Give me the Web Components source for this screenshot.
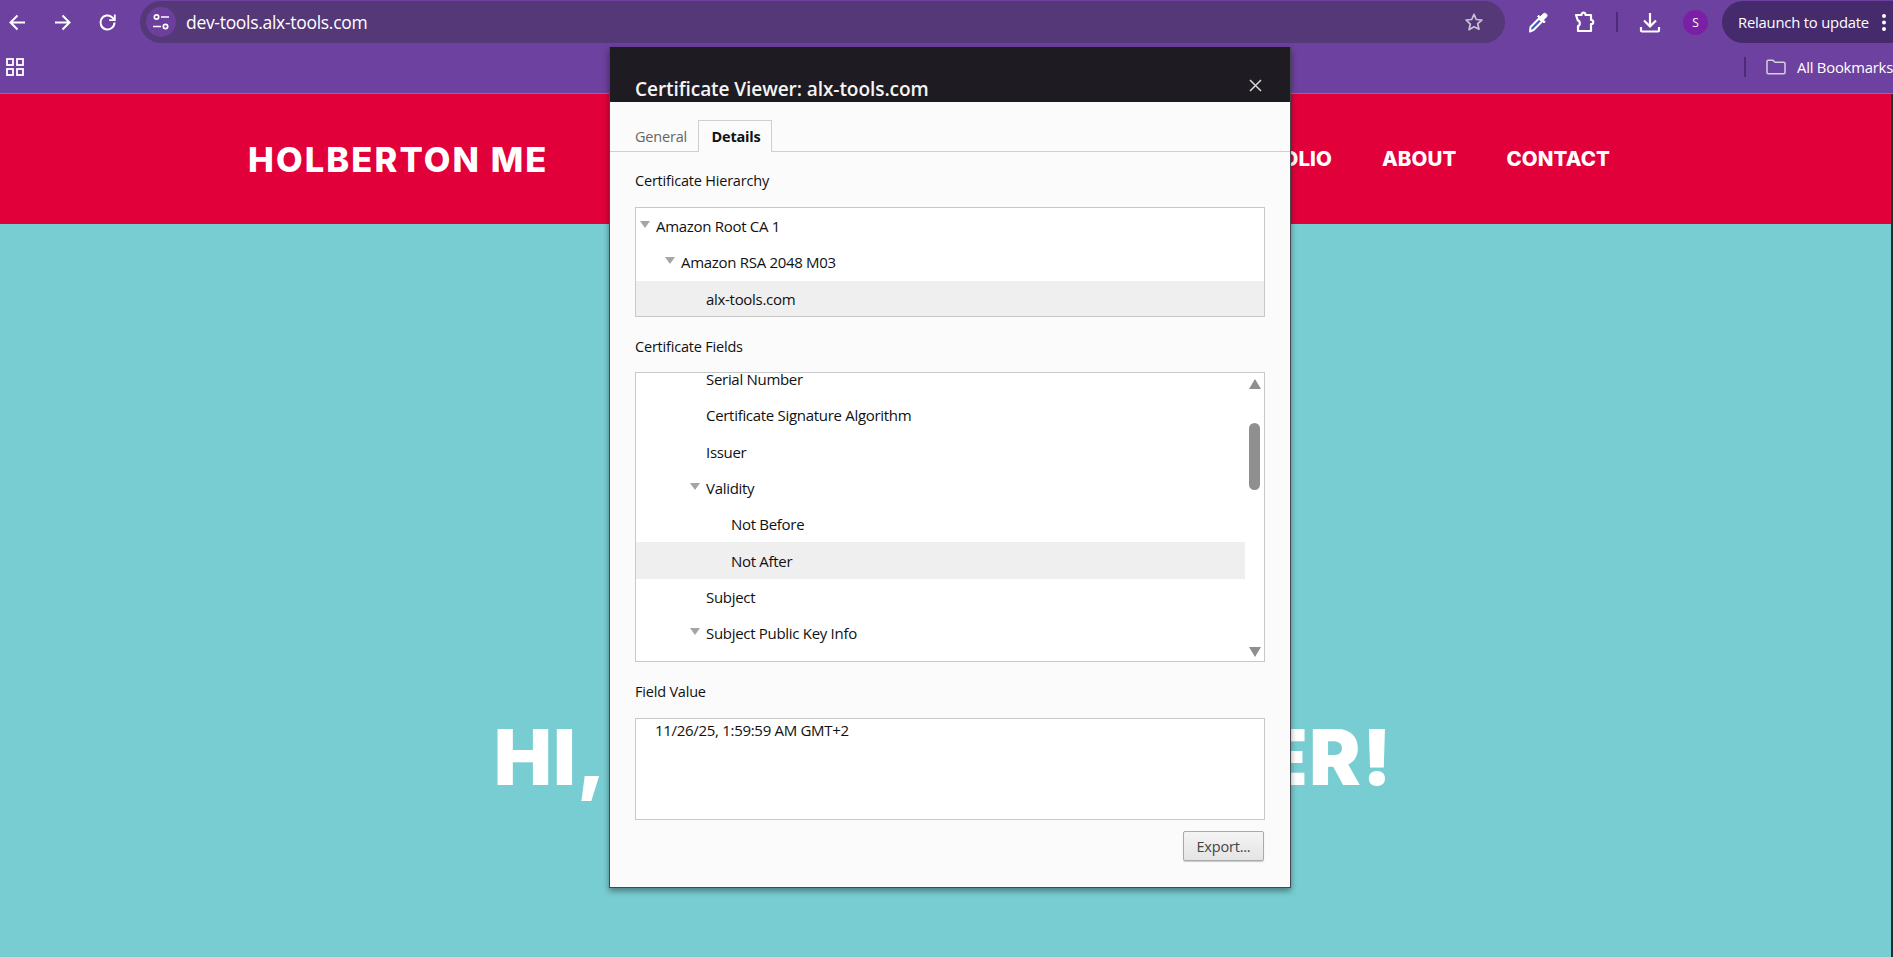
<!DOCTYPE html>
<html lang="en">
<head>
<meta charset="utf-8">
<title>Certificate Viewer</title>
<style>
    html, body { margin: 0; height: 100%; overflow: hidden; background: #78cdd2; }
    body { font-family: "Open Sans", "Liberation Sans", sans-serif; }
</style>
</head>
<body>
<browser-toolbar></browser-toolbar>
<site-page>
    <site-header></site-header>
    <site-hero></site-hero>
</site-page>
<cert-dialog>
    <tree-view slot="hierarchy" style="height:108px">
        <tree-row level="0" open>Amazon Root CA 1</tree-row>
        <tree-row level="1" open>Amazon RSA 2048 M03</tree-row>
        <tree-row level="2" selected>alx-tools.com</tree-row>
    </tree-view>
    <tree-view slot="fields" scrollbar offset="-12" style="height:288px;margin-top:15px">
        <tree-row level="2">Serial Number</tree-row>
        <tree-row level="2">Certificate Signature Algorithm</tree-row>
        <tree-row level="2">Issuer</tree-row>
        <tree-row level="2" open>Validity</tree-row>
        <tree-row level="3">Not Before</tree-row>
        <tree-row level="3" selected>Not After</tree-row>
        <tree-row level="2">Subject</tree-row>
        <tree-row level="2" open>Subject Public Key Info</tree-row>
    </tree-view>
    <span slot="value">11/26/25, 1:59:59 AM GMT+2</span>
</cert-dialog>

<script>
class BrowserToolbar extends HTMLElement {
    constructor() {
        super();
        this.attachShadow({ mode: "open" });
        this.shadowRoot.innerHTML = `
            <style>
                :host {
                    display: block;
                    height: 94px;
                    box-sizing: border-box;
                    background: #6d419f;
                    border-bottom: 1px solid #8c68bf;
                    color: #fff;
                    font-size: 14.8px;
                }
                .row { display: flex; align-items: center; }
                .top { height: 44px; padding-left: 7px; }
                .bottom { height: 45px; padding-bottom: 4px; }
                svg { display: block; flex: none; }
                .nav { width: 21px; height: 21px; margin-right: 24px; }
                .nav.last { margin-right: 22px; }
                .pill {
                    width: 1365px;
                    height: 42px;
                    border-radius: 21px;
                    background: #553878;
                    display: flex;
                    align-items: center;
                    flex: none;
                }
                .chip {
                    width: 30px;
                    height: 30px;
                    margin-left: 6px;
                    border-radius: 50%;
                    background: #6b3f9b;
                    display: flex;
                    align-items: center;
                    justify-content: center;
                }
                .url { margin-left: 10px; font-size: 17.5px; letter-spacing: -.3px; flex: 1; }
                .star { margin-right: 21px; }
                .sep { width: 2px; height: 20px; background: #4b2c74; flex: none; }
                .avatar {
                    width: 25px;
                    height: 25px;
                    margin-left: 21px;
                    border-radius: 50%;
                    background: #7a1fa6;
                    font-size: 12px;
                    display: flex;
                    align-items: center;
                    justify-content: center;
                    flex: none;
                }
                .relaunch {
                    flex: 1;
                    height: 42px;
                    margin-left: 14px;
                    padding-left: 16px;
                    border-radius: 21px 0 0 21px;
                    background: #452a6c;
                    display: flex;
                    align-items: center;
                    white-space: nowrap;
                    letter-spacing: -.2px;
                }
                .dots { margin-left: 12px; }
                .apps { margin: 0 0 0 6px; }
                .bookmarks { margin-left: auto; display: flex; align-items: center; white-space: nowrap; letter-spacing: -.2px; }
                .bookmarks svg { margin: 0 11px 0 20px; }
            </style>
            <div class="row top">
                <svg class="nav" viewBox="0 0 21 21" fill="none" stroke="#fff" stroke-width="2"><path d="M18 10.5H4M10.5 3.5l-7 7 7 7"/></svg>
                <svg class="nav" viewBox="0 0 21 21" fill="none" stroke="#fff" stroke-width="2"><path d="M3 10.5h14M10.5 3.5l7 7-7 7"/></svg>
                <svg class="nav last" viewBox="0 0 21 21" fill="none" stroke="#fff" stroke-width="2"><path d="M17.5 10.5a7 7 0 1 1-2.2-5.1L17.5 7.5"/><path d="M17.8 2.5v5.6h-5.6" stroke-width="1.8"/></svg>
                <div class="pill">
                    <div class="chip">
                        <svg width="18" height="18" viewBox="0 0 18 18" fill="none" stroke="#fff" stroke-width="1.7"><circle cx="4.5" cy="4" r="2.2"/><path d="M9 4h8M1 13.5h8"/><circle cx="13.5" cy="13.5" r="2.2"/></svg>
                    </div>
                    <span class="url">dev-tools.alx-tools.com</span>
                    <svg class="star" width="20" height="20" viewBox="0 0 20 20" fill="none" stroke="#c9c2d3" stroke-width="1.7" stroke-linejoin="round"><path d="M10 2.3l2.3 5.2 5.6.5-4.2 3.7 1.3 5.5L10 14.8l-5 2.9 1.3-5.5L2.1 8l5.6-.5z"/></svg>
                </div>
                <svg width="24" height="24" viewBox="0 0 24 24" fill="none" style="margin-left:21px">
                    <path d="M4.500 17L13 8.500l3 3L7.500 20l-3.500 1.500z" fill="#3c5bd0" stroke="#fff" stroke-width="2" stroke-linejoin="round"/>
                    <path d="M11.500 6.500l6.500 6.500 1.200-1.200-1.800-1.800 2.800-2.800c1.100-1.100 1.100-2.400.1-3.300s-2.200-.9-3.300.2l-2.700 2.700-1.600-1.600z" fill="#fff" stroke="#fff"/>
                </svg>
                <svg width="24" height="24" viewBox="0 0 24 24" fill="none" stroke="#fff" stroke-width="2.200" stroke-linejoin="round" style="margin-left:22px">
                    <path d="M4 5h5.500c0-3.200 4-3.200 4 0H19v5c3 0 3 4.200 0 4.200V21H6v-5c2.400-.6 2.400-5-.2-5.600z"/>
                </svg>
                <div class="sep" style="margin-left:20px"></div>
                <svg width="24" height="24" viewBox="0 0 24 24" fill="none" stroke="#fff" stroke-width="2.200" style="margin-left:20px">
                    <path d="M12 3v13M6 10.500l6 6 6-6M3 17v3.500c0 .6.4 1 1 1h16c.6 0 1-.4 1-1V17"/>
                </svg>
                <div class="avatar">S</div>
                <div class="relaunch">Relaunch to update
                    <svg class="dots" width="6" height="20" viewBox="0 0 6 20" fill="#fff"><circle cx="3" cy="4" r="2"/><circle cx="3" cy="10.500" r="2"/><circle cx="3" cy="17" r="2"/></svg>
                </div>
            </div>
            <div class="row bottom">
                <svg class="apps" width="18" height="18" viewBox="0 0 18 18" fill="none" stroke="#fff" stroke-width="1.800"><rect x="1" y="1" width="6" height="6"/><rect x="11" y="1" width="6" height="6"/><rect x="1" y="11" width="6" height="6"/><rect x="11" y="11" width="6" height="6"/></svg>
                <div class="bookmarks">
                    <div class="sep"></div>
                    <svg width="20" height="16" viewBox="0 0 20 16" fill="none" stroke="#d5d0da" stroke-width="1.500"><path d="M1 2.500c0-.8.500-1.300 1.300-1.300H7l2 2h8.700c.8 0 1.300.5 1.300 1.300v9c0 .8-.5 1.300-1.300 1.300H2.300c-.8 0-1.300-.5-1.300-1.300z"/></svg>
                    <span>All Bookmarks</span>
                </div>
            </div>
        `;
    }
}

class SitePage extends HTMLElement {
    constructor() {
        super();
        this.attachShadow({ mode: "open" });
        this.shadowRoot.innerHTML = `
            <style>
                :host {
                    display: block;
                    height: 863px;
                    box-sizing: border-box;
                    border-right: 2px solid #2b2b2b;
                    background: #78cdd2;
                }
            </style>
            <slot></slot>
        `;
    }
}

class SiteHeader extends HTMLElement {
    constructor() {
        super();
        this.attachShadow({ mode: "open" });
        this.shadowRoot.innerHTML = `
            <style>
                :host {
                    display: flex;
                    align-items: center;
                    justify-content: space-between;
                    height: 130px;
                    padding: 0 281px 0 248px;
                    background: #e1003a;
                    color: #fff;
                    font-family: Inter, "Liberation Sans", sans-serif;
                    font-weight: 800;
                }
                .logo { font-size: 34.5px; letter-spacing: 2.1px; white-space: nowrap; }
                nav { display: flex; gap: 50px; padding-bottom: 2px; font-size: 20.5px; letter-spacing: .1px; }
            </style>
            <div class="logo">HOLBERTON ME</div>
            <nav><span>PORTFOLIO</span><span>ABOUT</span><span>CONTACT</span></nav>
        `;
    }
}

class SiteHero extends HTMLElement {
    constructor() {
        super();
        this.attachShadow({ mode: "open" });
        this.shadowRoot.innerHTML = `
            <style>
                :host {
                    display: block;
                    padding: 495px 0 0 494px;
                    color: #fff;
                    font-family: Inter, "Liberation Sans", sans-serif;
                    font-weight: 900;
                    font-size: 77px;
                    line-height: 76px;
                }
                .line { display: flex; justify-content: space-between; width: 899px; letter-spacing: 1.5px; }
            </style>
            <div class="line"><span>HI,</span><span>ER!</span></div>
        `;
    }
}

class TreeRow extends HTMLElement {
    constructor() {
        super();
        this.attachShadow({ mode: "open" });
        this.shadowRoot.innerHTML = `
            <style>
                :host {
                    display: flex;
                    align-items: center;
                    height: 36.3px;
                    white-space: nowrap;
                    font-size: 15px;
                    letter-spacing: -.3px;
                }
                :host([selected]) { background: #efefef; }
                .twisty { width: 20px; flex: none; display: flex; justify-content: flex-start; padding-bottom: 4px; }
                .twisty i {
                    display: none;
                    margin-left: 4px;
                    border-style: solid;
                    border-width: 7px 5px 0;
                    border-color: #a5a5a5 transparent transparent;
                }
                :host([open]) .twisty i { display: block; }
            </style>
            <div class="twisty"><i></i></div>
            <slot></slot>
        `;
    }

    connectedCallback() {
        const level = Number(this.getAttribute("level") || 0);
        this.style.paddingLeft = level * 25 + "px";
    }
}

class TreeView extends HTMLElement {
    static get observedAttributes() {
        return ["offset"];
    }

    constructor() {
        super();
        this.attachShadow({ mode: "open" });
        this.shadowRoot.innerHTML = `
            <style>
                :host {
                    display: flex;
                    background: #fff;
                    border: 1px solid #c8c8c8;
                    overflow: hidden;
                }
                .list { flex: 1; min-width: 0; }
                .bar {
                    display: none;
                    width: 19px;
                    flex: none;
                    flex-direction: column;
                    align-items: center;
                    position: relative;
                }
                :host([scrollbar]) .bar { display: flex; }
                .up, .down { border-style: solid; border-color: transparent; position: absolute; }
                .up { top: 6px; border-width: 0 6px 10px; border-bottom-color: #8f8f8f; }
                .down { bottom: 4px; border-width: 10px 6px 0; border-top-color: #8f8f8f; }
                .thumb { position: absolute; top: 50px; width: 11px; height: 67px; border-radius: 6px; background: #8f8f8f; }
            </style>
            <div class="list"><slot></slot></div>
            <div class="bar"><div class="up"></div><div class="thumb"></div><div class="down"></div></div>
        `;
    }

    attributeChangedCallback(name, oldValue, newValue) {
        if (name === "offset") {
            this.shadowRoot.querySelector(".list").style.marginTop = newValue + "px";
        }
    }
}

class CertDialog extends HTMLElement {
    constructor() {
        super();
        this.attachShadow({ mode: "open" });
        this.shadowRoot.innerHTML = `
            <style>
                :host {
                    position: absolute;
                    left: 609px;
                    top: 47px;
                    width: 682px;
                    height: 841px;
                    box-sizing: border-box;
                    display: block;
                    background: #fbfbfb;
                    border: 1px solid #45484c;
                    border-top: 0;
                    box-shadow: 0 3px 6px rgba(0, 0, 0, .4);
                    color: #111;
                    font-family: "Open Sans", "Liberation Sans", sans-serif;
                    font-size: 14.5px;
                    letter-spacing: -.2px;
                }
                header {
                    height: 55px;
                    box-sizing: border-box;
                    padding: 0 25px;
                    background: #1e1c22;
                    color: #f4f4f4;
                    display: flex;
                    align-items: flex-end;
                    justify-content: space-between;
                    font-size: 19.1px;
                    font-weight: 600;
                    letter-spacing: -.1px;
                }
                header span { line-height: 26px; }
                header svg { margin: 0 3px 10px 0; }
                .tabs {
                    height: 50px;
                    box-sizing: border-box;
                    padding: 18px 0 0 25px;
                    border-bottom: 1px solid #cfcfcf;
                    display: flex;
                }
                .tab { height: 32px; box-sizing: border-box; display: flex; align-items: center; }
                .general { color: #666; width: 63px; }
                .details {
                    width: 74px;
                    padding-left: 2px;
                    justify-content: center;
                    font-weight: 700;
                    background: #fbfbfb;
                    border: 1px solid #cfcfcf;
                    border-bottom: 0;
                }
                .body { padding: 0 25px; }
                .label { height: 20px; line-height: 20px; }
                .value {
                    height: 102px;
                    box-sizing: border-box;
                    margin-top: 16px;
                    padding: 1px 19px;
                    line-height: 20px;
                    font-size: 15px;
                    letter-spacing: -.3px;
                    background: #fff;
                    border: 1px solid #c8c8c8;
                }
                .actions { display: flex; justify-content: flex-end; margin: 11px 1px 0 0; }
                .export {
                    width: 81px;
                    height: 30px;
                    box-sizing: border-box;
                    display: flex;
                    align-items: center;
                    justify-content: center;
                    color: #444;
                    border: 1px solid #aaa;
                    border-radius: 2px;
                    background: linear-gradient(#f4f4f4, #e4e4e4);
                    box-shadow: 0 1px 1px rgba(0, 0, 0, .2);
                }
                ::slotted(tree-view) { margin: 16px 0 20px; }
            </style>
            <header>
                <span>Certificate Viewer: alx-tools.com</span>
                <svg width="13" height="13" viewBox="0 0 13 13" stroke="#d8d8d8" stroke-width="1.500"><path d="M1 1l11 11M12 1L1 12"/></svg>
            </header>
            <div class="tabs">
                <div class="tab general">General</div>
                <div class="tab details">Details</div>
            </div>
            <div class="body">
                <div class="label" style="margin-top:19px">Certificate Hierarchy</div>
                <slot name="hierarchy"></slot>
                <div class="label">Certificate Fields</div>
                <slot name="fields"></slot>
                <div class="label">Field Value</div>
                <div class="value"><slot name="value"></slot></div>
                <div class="actions"><div class="export">Export...</div></div>
            </div>
        `;
    }
}

customElements.define("browser-toolbar", BrowserToolbar);
customElements.define("site-page", SitePage);
customElements.define("site-header", SiteHeader);
customElements.define("site-hero", SiteHero);
customElements.define("tree-row", TreeRow);
customElements.define("tree-view", TreeView);
customElements.define("cert-dialog", CertDialog);
</script>
</body>
</html>
